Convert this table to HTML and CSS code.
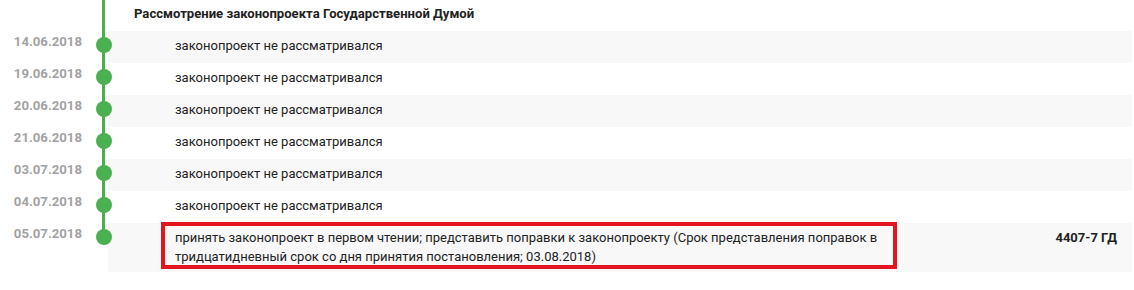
FILE: index.html
```html
<!DOCTYPE html>
<html lang="ru">
<head>
<meta charset="utf-8">
<title>Рассмотрение законопроекта</title>
<link rel="stylesheet" href="styles.css">
</head>
<body>
<div class="timeline">
  <div class="row head">
    <div class="date"></div>
    <div class="track"></div>
    <div class="content"><span class="stage">Рассмотрение законопроекта Государственной Думой</span></div>
  </div>
  <div class="row shade">
    <div class="date">14.06.2018</div>
    <div class="track dot"></div>
    <div class="content"><span class="desc">законопроект не рассматривался</span></div>
  </div>
  <div class="row">
    <div class="date">19.06.2018</div>
    <div class="track dot"></div>
    <div class="content"><span class="desc">законопроект не рассматривался</span></div>
  </div>
  <div class="row shade">
    <div class="date">20.06.2018</div>
    <div class="track dot"></div>
    <div class="content"><span class="desc">законопроект не рассматривался</span></div>
  </div>
  <div class="row">
    <div class="date">21.06.2018</div>
    <div class="track dot"></div>
    <div class="content"><span class="desc">законопроект не рассматривался</span></div>
  </div>
  <div class="row shade">
    <div class="date">03.07.2018</div>
    <div class="track dot"></div>
    <div class="content"><span class="desc">законопроект не рассматривался</span></div>
  </div>
  <div class="row">
    <div class="date">04.07.2018</div>
    <div class="track dot"></div>
    <div class="content"><span class="desc">законопроект не рассматривался</span></div>
  </div>
  <div class="row shade last">
    <div class="date">05.07.2018</div>
    <div class="track dot end"></div>
    <div class="content">
      <span class="desc highlighted">принять законопроект в первом чтении; представить поправки к законопроекту (Срок представления поправок в тридцатидневный срок со дня принятия постановления; 03.08.2018)</span>
      <span class="doc">4407-7 ГД</span>
    </div>
  </div>
</div>
</body>
</html>
```

FILE: styles.css
```css
*, *::before, *::after { box-sizing: border-box; }

body {
  margin: 0;
  background: #ffffff;
  font-family: Roboto, "Liberation Sans", Arial, sans-serif;
  font-size: 13px;
  line-height: 19px;
  color: #222222;
}

.timeline {
  display: flex;
  flex-direction: column;
  padding-right: 2px;
}

.row {
  display: grid;
  grid-template-columns: 82px 26px 1fr;
  min-height: 32px;
}

.row.head {
  min-height: 31px;
}

.date {
  text-align: right;
  font-weight: 700;
  font-size: 13.2px;
  color: #a3a3a3;
  padding-top: 1px;
  line-height: 19px;
}

.track {
  position: relative;
}

.track::before {
  content: "";
  position: absolute;
  left: 20px;
  width: 3px;
  top: 0;
  bottom: 0;
  background: #4cb050;
}

.track.end::before {
  bottom: auto;
  height: 14px;
}

.track.dot::after {
  content: "";
  position: absolute;
  left: 14px;
  top: 6px;
  width: 16px;
  height: 16px;
  border-radius: 50%;
  background: #4cb050;
  z-index: 2;
}

.content {
  display: flex;
  justify-content: space-between;
  align-items: flex-start;
  padding: 5px 15px 8px 67px;
}

.row.shade .content {
  background: #f8f8f8;
}

.row.head .content {
  padding-left: 26px;
  padding-top: 4px;
}

.stage {
  font-weight: 700;
  font-size: 13.1px;
  color: #222222;
}

.desc {
  color: #222222;
}

.row.last .content {
  padding-bottom: 6px;
}

.highlighted {
  max-width: 725px;
  position: relative;
}

.highlighted::after {
  content: "";
  position: absolute;
  left: -14px;
  top: -6px;
  width: 736px;
  height: 47px;
  border: 4px solid #e3161f;
}

.doc {
  font-weight: 700;
  color: #222222;
}
```
